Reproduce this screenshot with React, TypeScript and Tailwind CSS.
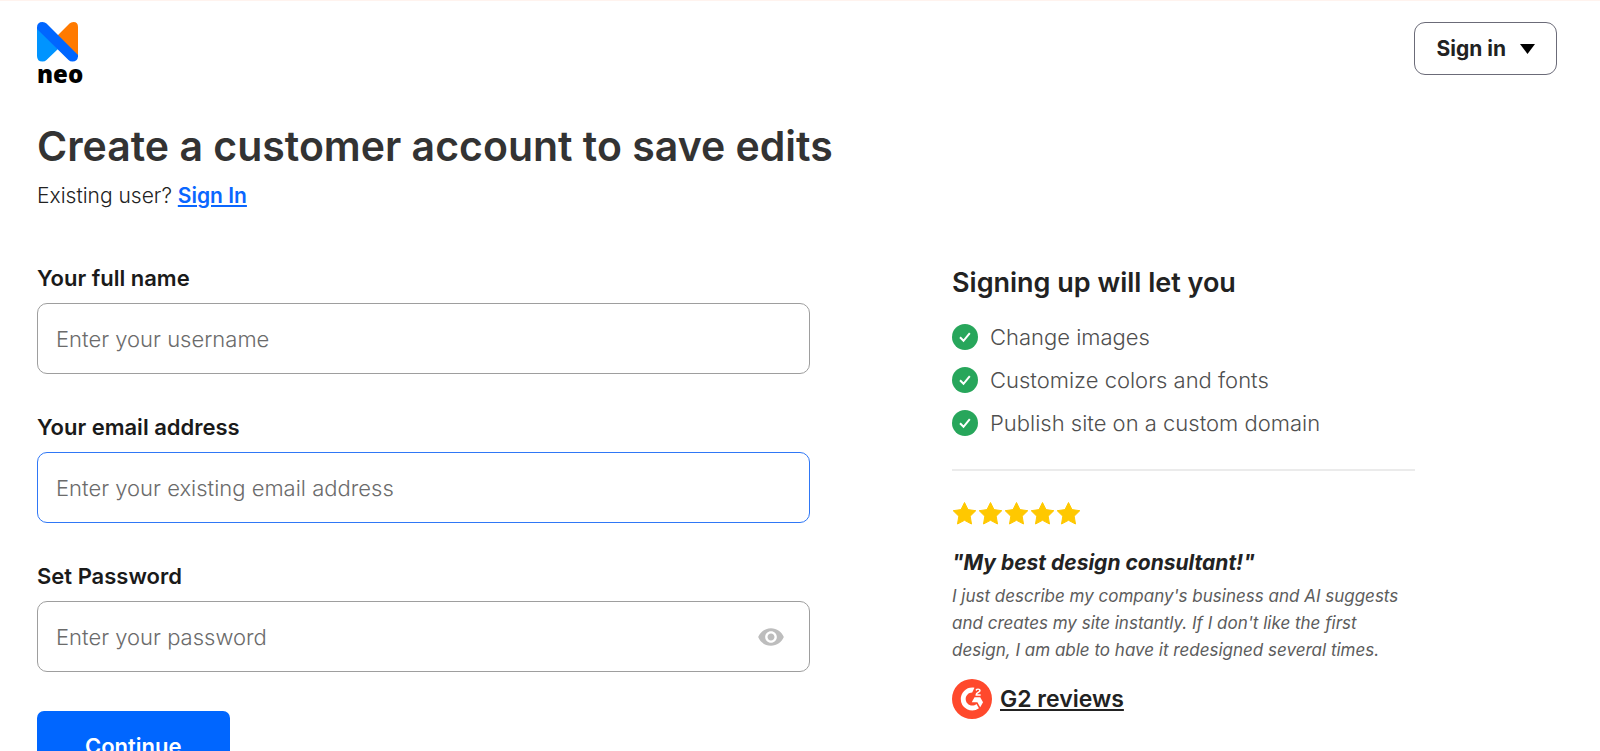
import { useState } from "react";
import { MdVisibility } from "react-icons/md";
import { SiG2 } from "react-icons/si";

const benefits = [
  "Change images",
  "Customize colors and fonts",
  "Publish site on a custom domain",
];

function Logo() {
  return (
    <a href="#" className="flex flex-col text-black">
      <svg width="42" height="40" viewBox="0 0 42 40" aria-hidden="true">
        <path
          d="M20 14 32.5 1.6Q34 0 36.500 0 41 0 41 5V34L20 15Z"
          fill="#ff7a00"
        />
        <path
          d="M0 6 21 27 9.500 38Q8 39.500 5.500 39.500 0 39.500 0 34Z"
          fill="#0094ff"
        />
        <path
          d="M0 5.500Q0 0 5.500 0 8 0 9.500 1.500L41 33V34.500Q40.500 39.500 35.500 39.500 33 39.500 31.500 38L0 7Z"
          fill="#0066ff"
        />
      </svg>
      <span className="font-['Open_Sans',sans-serif] text-[24px] leading-[24px] font-extrabold">
        neo
      </span>
    </a>
  );
}

function Field({
  id,
  label,
  type = "text",
  placeholder,
  active = false,
}: {
  id: string;
  label: string;
  type?: string;
  placeholder: string;
  active?: boolean;
}) {
  const [visible, setVisible] = useState(false);
  const isPassword = type === "password";

  return (
    <div className="flex flex-col gap-[10px]">
      <label
        htmlFor={id}
        className="text-[22px] leading-[30px] font-semibold text-[#1a1a1a]"
      >
        {label}
      </label>
      <div
        className={`flex h-[71px] items-center rounded-[10px] border bg-white pr-6 pl-[18px] ${
          active ? "border-[#2f77f6]" : "border-[#9e9e9e]"
        }`}
      >
        <input
          id={id}
          type={visible ? "text" : type}
          placeholder={placeholder}
          className="min-w-0 flex-1 text-[22px] leading-[30px] font-light text-[#222] outline-none placeholder:text-[#6b6b6b]"
        />
        {isPassword && (
          <button
            type="button"
            aria-label="Show password"
            onClick={() => setVisible(!visible)}
            className="cursor-pointer text-[#bdbdbd]"
          >
            <MdVisibility size={28} />
          </button>
        )}
      </div>
    </div>
  );
}

function Star() {
  return (
    <svg width="26" height="25" viewBox="0 0 26 25" aria-hidden="true">
      <path
        d="M12.500 1.500 16 8.600 23.800 9.700 18.200 15.200 19.500 23 12.500 19.300 5.500 23 6.800 15.200 1.200 9.700 9 8.600Z"
        fill="#ffc800"
        stroke="#ffc800"
        strokeLinejoin="round"
      />
    </svg>
  );
}

export default function App() {
  return (
    <div className="min-h-screen border-t border-[#fff3ee] bg-white pb-10 font-[Inter,sans-serif] text-[#222]">
      <header className="flex items-start justify-between pt-[21px] pr-[43px] pl-[37px]">
        <Logo />
        <button
          type="button"
          className="flex h-[53px] cursor-pointer items-center gap-[14px] rounded-[11px] border border-[#6b6b78] px-[21px] text-[21px] font-bold"
        >
          Sign in
          <svg width="15" height="10" viewBox="0 0 15 10" aria-hidden="true">
            <path d="M0 0H15L7.500 10Z" fill="#000" />
          </svg>
        </button>
      </header>

      <main className="pr-[185px] pl-[37px]">
        <h1 className="mt-[30px] text-[41px] leading-[60px] font-semibold whitespace-nowrap text-[#333]">
          Create a customer account to save edits
        </h1>
        <p className="mt-[5px] text-[21px] leading-[30px]">
          <span className="font-light">Existing user?</span>{" "}
          <a
            href="#"
            className="font-semibold text-[#0a66ff] underline decoration-2 underline-offset-2"
          >
            Sign In
          </a>
        </p>

        <div className="mt-[52px] grid grid-cols-[773fr_463fr] gap-[142px]">
          <form className="flex flex-col items-start gap-[39px]">
            <div className="flex w-full flex-col gap-[38px]">
              <Field
                id="name"
                label="Your full name"
                placeholder="Enter your username"
              />
              <Field
                id="email"
                label="Your email address"
                type="email"
                placeholder="Enter your existing email address"
                active
              />
              <Field
                id="password"
                label="Set Password"
                type="password"
                placeholder="Enter your password"
              />
            </div>
            <button
              type="submit"
              className="h-[70px] cursor-pointer rounded-[7px] bg-[#0066ff] px-12 text-[22px] font-semibold text-white"
            >
              Continue
            </button>
          </form>

          <aside>
            <h2 className="text-[27px] leading-[39px] font-semibold">
              Signing up will let you
            </h2>
            <ul className="mt-[20px] flex flex-col gap-[13px]">
              {benefits.map((benefit) => (
                <li
                  key={benefit}
                  className="flex items-center gap-[12px] text-[22px] leading-[30px] font-light text-[#4f4f4f]"
                >
                  <svg
                    width="26"
                    height="26"
                    viewBox="0 0 26 26"
                    fill="none"
                    aria-hidden="true"
                  >
                    <circle cx="13" cy="13" r="13" fill="#27a65b" />
                    <path
                      d="M8 13.300 11.500 16.800 17.800 9.200"
                      stroke="#fff"
                      strokeWidth="2"
                    />
                  </svg>
                  {benefit}
                </li>
              ))}
            </ul>
            <hr className="mt-[31px] border-t-2 border-[#ebebeb]" />
            <div className="mt-[30px] flex" role="img" aria-label="5 stars">
              {[1, 2, 3, 4, 5].map((n) => (
                <Star key={n} />
              ))}
            </div>
            <blockquote className="mt-[22px] italic">
              <p className="text-[21px] leading-[30px] font-bold">
                "My best design consultant!"
              </p>
              <p className="mt-[5px] text-[17px] leading-[27px] text-[#5c5c5c]">
                I just describe my company's business and AI suggests and
                creates my site instantly. If I don't like the first design, I
                am able to have it redesigned several times.
              </p>
            </blockquote>
            <div className="mt-[15px] flex items-center gap-2">
              <SiG2 size={40} color="#ff492c" aria-hidden="true" />
              <a
                href="#"
                className="text-[23px] leading-[34px] font-semibold underline decoration-2 underline-offset-2"
              >
                G2 reviews
              </a>
            </div>
          </aside>
        </div>
      </main>
    </div>
  );
}
